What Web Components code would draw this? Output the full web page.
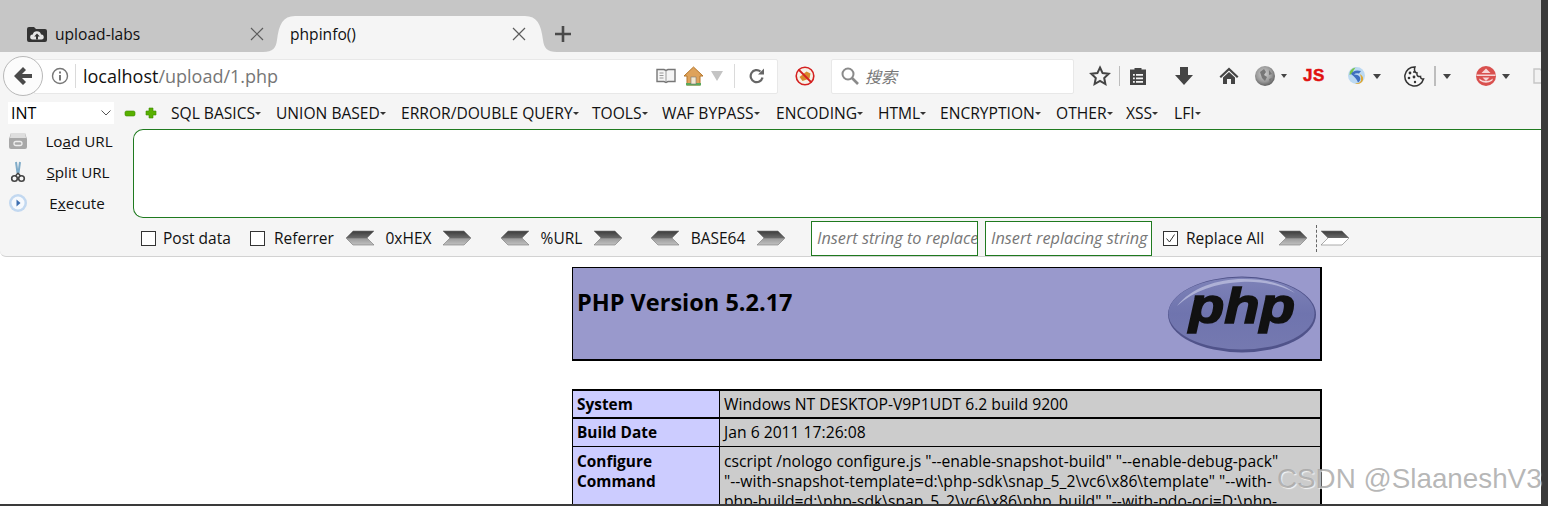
<!DOCTYPE html>
<html>
<head>
<meta charset="utf-8">
<title>phpinfo()</title>
<style>
  html, body { margin: 0; padding: 0; background: #fff; overflow: hidden; }
</style>
</head>
<body>
<browser-window>
  <tab-strip>
    <browser-tab icon="cloud" label="upload-labs"></browser-tab>
    <browser-tab active label="phpinfo()"></browser-tab>
  </tab-strip>
  <nav-bar></nav-bar>
  <hack-bar></hack-bar>
  <php-info></php-info>
</browser-window>

<script>
// window frame, dark line right and bottom + watermark on top
class BrowserWindow extends HTMLElement {
  constructor() {
    super();
    this.attachShadow({ mode: "open" }).innerHTML = `
    <style>
      :host { display: block; position: relative; width: 1548px; height: 506px; font-family: "Open Sans", "Noto Sans", sans-serif; color: #000; }
      .frame { display: flex; flex-direction: column; width: 1548px; height: 506px; box-sizing: border-box; border-right: 7px solid #3a3a3a; border-bottom: 2px solid #3a3a3a; overflow: hidden; background: #fff; }
      .mark { position: absolute; left: 1277px; top: 463px; font: 27.800px "Liberation Sans", sans-serif; white-space: nowrap;
        color: rgba(160,160,160,.75); text-shadow: 1px 1px 1px rgba(255,255,255,.8); }
    </style>
    <div class="frame"><slot></slot></div>
    <div class="mark">CSDN @SlaaneshV3</div>`;
  }
}
customElements.define("browser-window", BrowserWindow);

class TabStrip extends HTMLElement {
  constructor() {
    super();
    this.attachShadow({ mode: "open" }).innerHTML = `
    <style>
      :host { display: flex; height: 52px; flex: none; align-items: flex-end; background: #c6c6c6; padding-left: 16px; }
      .plus { width: 36px; height: 36px; margin-left: 2px; }
    </style>
    <slot></slot>
    <svg class="plus" viewBox="0 0 36 36"><path d="M18 10v16M10 18h16" stroke="#4a4a4a" stroke-width="2.600" fill="none"/></svg>`;
  }
}
customElements.define("tab-strip", TabStrip);

class BrowserTab extends HTMLElement {
  constructor() {
    super();
    const label = this.getAttribute("label");
    const icon = this.getAttribute("icon") ? `<svg class="ic" viewBox="0 0 20 16"><path d="M0 3q0-2 2-2h5l2 2h9q2 0 2 2v9q0 2-2 2H2q-2 0-2-2z" fill="#333"/><path d="M5.500 13.500a2.500 2.500 0 0 1 .3-5 4.200 4.200 0 0 1 8.200 0 2.500 2.500 0 0 1 .5 5z" fill="#e4e4e4"/><path d="M10 7.500l2.800 3H11v3H9v-3H7.200z" fill="#333"/></svg>` : "";
    const shape = this.hasAttribute("active") ? `<svg class="shape" width="294" height="36" viewBox="0 0 294 36"><path d="M0 36C10 36 13 32 14 24C16 8 20 0 32 0H262C274 0 278 8 280 24C281 32 284 36 294 36Z" fill="#f5f5f5"/></svg>` : "";
    this.attachShadow({ mode: "open" }).innerHTML = `
    <style>
      :host { display: flex; align-items: center; box-sizing: border-box; width: 261px; height: 36px; font-size: 15.600px; color: #111; position: relative; padding-left: 11px; }
      :host([active]) { width: 266px; padding-left: 13px; }
      .shape { position: absolute; left: -14px; top: 0; }
      .ic { width: 20px; height: 16px; margin-right: 8px; }
      .lbl { flex: 1; position: relative; }
      .x { width: 14px; height: 14px; margin-right: 13px; position: relative; flex: none; }
      :host([active]) .x { margin-right: 17px; }
    </style>
    ${shape}${icon}<span class="lbl">${label}</span>
    <svg class="x" viewBox="0 0 14 14"><path d="M1 1l12 12M13 1L1 13" stroke="#5c5c5c" stroke-width="1.200" fill="none"/></svg>`;
  }
}
customElements.define("browser-tab", BrowserTab);

class NavBar extends HTMLElement {
  constructor() {
    super();
    this.attachShadow({ mode: "open" }).innerHTML = `
    <style>
      :host { display: flex; align-items: center; height: 48px; flex: none; background: #f5f5f5; position: relative; padding-left: 3px; box-sizing: border-box; }
      .back { width: 40px; height: 40px; box-sizing: border-box; border: 1px solid #b8b8b8; border-radius: 50%; background: #fcfcfc; flex: none; z-index: 1; display: flex; align-items: center; justify-content: center; margin-top: -1px; }
      .url { width: 744px; height: 35px; box-sizing: border-box; margin-left: -9px; background: #fff; border: 1px solid #e8e8e8; border-radius: 0 2px 2px 0; display: flex; align-items: center; padding-left: 16px; font-size: 18px; flex: none; }
      .url .host { color: #111; }
      .url .path { color: #767676; }
      .sep { width: 1px; height: 24px; background: #dadada; margin: 0 6px; flex: none; }
      .grow { flex: 1; }
      .search { width: 243px; height: 35px; box-sizing: border-box; margin-left: 16px; background: #fff; border: 1px solid #e8e8e8; border-radius: 2px; display: flex; align-items: center; padding-left: 8px; gap: 5px; color: #777; font: italic 16px "Noto Sans CJK SC", sans-serif; flex: none; }
      svg { display: block; flex: none; }
      .tools { display: flex; align-items: center; margin-left: 15px; }
      .dd { width: 0; height: 0; border: 4px solid transparent; border-top: 5px solid #444; border-bottom: 0; flex: none; }
      .vsep { width: 1px; height: 20px; background: #bdbdbd; flex: none; }
      .js { margin-left: 16px; width: 26px; font: 900 17px "Liberation Sans", sans-serif; color: #e01010; letter-spacing: .5px; -webkit-text-stroke: .5px #e01010; flex: none; }
    </style>
    <div class="back"><svg width="22" height="22" viewBox="0 0 22 22"><path d="M11 2L2 11l9 9 3-3-4-4h10V9H10l4-4z" fill="#4a4a4a"/></svg></div>
    <div class="url">
      <svg width="18" height="18" viewBox="0 0 18 18" style="margin-right:6px"><circle cx="9" cy="9" r="7.500" fill="none" stroke="#777" stroke-width="1.400"/><rect x="8" y="8" width="2" height="5.500" fill="#777"/><rect x="8" y="4.500" width="2" height="2" fill="#777"/></svg>
      <span class="sep" style="margin:0 7px 0 0"></span>
      <span class="host">localhost</span><span class="path">/upload/1.php</span>
      <span class="grow"></span>
      <svg width="20" height="16" viewBox="0 0 20 16" style="margin-right:7px"><path d="M1 1.500h7l2 1 2-1h7v12h-7l-2 1-2-1H1z" fill="#f5f5f5" stroke="#777" stroke-width="1.400"/><path d="M10 2.500v11M3.500 5h4M3.500 7.500h4M3.500 10h4" stroke="#999" fill="none"/></svg>
      <svg width="21" height="20" viewBox="0 0 21 20"><path d="M10.500 1L1 10h3v9h13v-9h3z" fill="#dea25a" stroke="#b5762a"/><path d="M3 17h15v2.500H3z" fill="#5ba85b"/><rect x="8" y="11" width="5" height="7" fill="#f3e8d0" stroke="#777" stroke-width=".6"/></svg>
      <svg width="12" height="10" viewBox="0 0 12 10" style="margin-left:7px"><path d="M0 0h12L6 10z" fill="#c4c4c4"/></svg>
      <span class="sep" style="margin:0 14px 0 11px"></span>
      <svg width="16" height="16" viewBox="0 0 16 16" style="margin-right:12px"><path d="M13.500 9.500A6 6 0 1 1 11.500 3.500" fill="none" stroke="#666" stroke-width="2.200"/><path d="M9 6.500h6v-6z" fill="#666"/></svg>
    </div>
    <svg style="margin-left:17px" width="20" height="20" viewBox="0 0 20 20"><circle cx="10" cy="10" r="8.800" fill="#f6f2e8" stroke="#d42020" stroke-width="1.600"/><path d="M4.500 11l7-5.500 4 2-1 5-7 2.500z" fill="#d98a2b"/><path d="M3.500 3.500l13 13" stroke="#d42020" stroke-width="1.800"/></svg>
    <div class="search"><svg width="20" height="20" viewBox="0 0 20 20"><circle cx="8" cy="8" r="5.500" fill="none" stroke="#8a8a8a" stroke-width="2"/><path d="M12 12l6 6" stroke="#8a8a8a" stroke-width="2.600"/></svg><span>搜索</span></div>
    <div class="tools">
      <svg width="22" height="22" viewBox="0 0 22 22"><path d="M11 2.500l2.600 5.600 6.100.7-4.500 4.200 1.200 6L11 16l-5.400 3 1.200-6-4.500-4.200 6.100-.7z" fill="none" stroke="#444" stroke-width="2"/></svg>
      <span class="vsep" style="margin:0 8px 0 8px"></span>
      <svg width="20" height="20" viewBox="0 0 20 20"><path d="M2 3.500h4.500V2h7v1.500H18V19H2z" fill="#444"/><path d="M5 8h1.800v1.800H5zM8 8h7v1.800H8zM5 11.500h1.800v1.800H5zM8 11.500h7v1.800H8zM5 15h1.800v1.800H5zM8 15h7v1.800H8z" fill="#f5f5f5"/></svg>
      <svg style="margin-left:26px" width="20" height="20" viewBox="0 0 20 20"><path d="M6 1h8v8h5l-9 10L1 9h5z" fill="#444"/></svg>
      <svg style="margin-left:25px" width="20" height="20" viewBox="0 0 20 20"><path d="M10 1.500L0.500 10.500 2 12l8-7.500L18 12l1.500-1.500z" fill="#444"/><path d="M4 11.500L10 6l6 5.500V18h-4v-5H8v5H4z" fill="#444"/></svg>
      <svg style="margin-left:15px" width="22" height="22" viewBox="0 0 22 22"><defs><radialGradient id="gl" cx=".45" cy=".4" r=".65"><stop offset="0" stop-color="#d0d0d0"/><stop offset=".6" stop-color="#9a9a9a"/><stop offset="1" stop-color="#555"/></radialGradient></defs><circle cx="11" cy="11" r="10" fill="url(#gl)"/><path d="M6 7l4-3 2 3-2 3 3 2-2 4-3-3zM15 5l3 4-3 1zM15 14l3-1-2 4z" fill="#777"/></svg>
      <span class="dd" style="margin-left:5px;border-width:3px;border-top-width:4px"></span>
      <span class="js">JS</span>
      <svg style="margin-left:18px" width="20" height="20" viewBox="0 0 20 20"><circle cx="9.500" cy="9.500" r="8.500" fill="#bcd9f2"/><path d="M2.500 9q-.5-6 6-7.500-2.500 3-3 6z" fill="#79c64a"/><path d="M4 8q3-5 10-3l-2 2.500q-3-1-5 1 5 0 6 3t-2 5q-1-4-7-8.500z" fill="#3f6fc0"/><path d="M13 8q5 3 2 8-3 3-7 1.500 5 0 6-3 .5-3-1-6.500z" fill="#e0a830"/></svg>
      <span class="dd" style="margin-left:6px"></span>
      <svg style="margin-left:22px" width="22" height="22" viewBox="0 0 22 22"><path d="M12 2a9.500 9.500 0 1 0 8.500 12c-2 .5-3-1-3-2.500-2.500.5-4-1-3.500-3.500-2 0-3.200-3-2-6z" fill="#f7f7f7" stroke="#333" stroke-width="1.500"/><circle cx="7" cy="8" r="1.400" fill="#333"/><circle cx="11" cy="7" r="1" fill="#333"/><circle cx="6" cy="13" r="1.300" fill="#333"/><circle cx="11" cy="12" r="1.400" fill="#333"/><circle cx="12" cy="17" r="1.200" fill="#333"/></svg>
      <span class="vsep" style="margin-left:9px;width:2px;height:20px"></span>
      <span class="dd" style="margin-left:7px"></span>
      <svg style="margin-left:24px" width="22" height="22" viewBox="0 0 22 22"><circle cx="11" cy="11" r="10" fill="#d9504e"/><path d="M1.500 9.500h19v1.500h-19z" fill="#f5d5d5"/><path d="M4 13.500q7 5 14 0l-.8 2.200q-6.200 4-12.400 0z" fill="#f8dcdc"/><path d="M11 3.500l4.500 4.500h-9z" fill="#f7d6d6"/><path d="M11 16l-3.500-3.500h7z" fill="#f7d6d6"/></svg>
      <span class="dd" style="margin-left:5px"></span>
      <svg style="margin-left:23px" width="11" height="16" viewBox="0 0 11 16"><path d="M1 1h6l3 3v11H1z" fill="#f2f2f2" stroke="#c6c6c6" stroke-width="1.400"/></svg>
    </div>`;
  }
}
customElements.define("nav-bar", NavBar);

class HackMenu extends HTMLElement {
  constructor() {
    super();
    this.attachShadow({ mode: "open" }).innerHTML = `
    <style>
      :host { display: flex; align-items: center; white-space: nowrap; font-size: 15.600px; color: #111; flex: none; }
      i { display: block; width: 0; height: 0; margin-left: 0; margin-top: 1px; border: 3px solid transparent; border-top: 3px solid #333; border-bottom: 0; }
    </style>
    <slot></slot><i></i>`;
  }
}
customElements.define("hack-menu", HackMenu);

class HackArrow extends HTMLElement {
  constructor() {
    super();
    const left = this.hasAttribute("left");
    const hollow = this.hasAttribute("hollow");
    const id = "g" + (left ? "l" : "r");
    const d = left ? "M0 8L7 1h21l-7 7 7 7H7z" : "M0 1h21l7 7-7 7H0l7-7z";
    this.attachShadow({ mode: "open" }).innerHTML = `
    <style>:host { display: block; width: 28px; height: 16px; flex: none; } svg { display: block; }</style>
    <svg width="28" height="16" viewBox="0 0 28 16"><defs><linearGradient id="${id}" x1="0" y1="0" x2="0" y2="1">
      <stop offset="0" stop-color="#3c3c3c"/><stop offset=".5" stop-color="#6a6a6a"/>
      ${hollow ? '<stop offset=".5" stop-color="#fff"/><stop offset="1" stop-color="#fff"/>' : '<stop offset=".55" stop-color="#9c9c9c"/><stop offset="1" stop-color="#c2c2c2"/>'}
    </linearGradient></defs><path d="${d}" fill="url(#${id})" stroke="#777" stroke-width=".6"/></svg>`;
  }
}
customElements.define("hack-arrow", HackArrow);

class HackSide extends HTMLElement {
  constructor() {
    super();
    this.attachShadow({ mode: "open" }).innerHTML = `
    <style>
      :host { display: flex; align-items: center; height: 31px; flex: none; font-size: 15.200px; color: #111; }
      .ic { width: 20px; height: 22px; margin-left: 8px; flex: none; display: flex; align-items: center; }
      .t { flex: 1; text-align: center; padding-right: var(--pr, 3px); white-space: nowrap; }
    </style>
    <span class="ic"><slot name="ic"></slot></span><span class="t"><slot></slot></span>`;
  }
}
customElements.define("hack-side", HackSide);

class CheckBox extends HTMLElement {
  constructor() {
    super();
    const on = this.hasAttribute("checked");
    this.attachShadow({ mode: "open" }).innerHTML = `
    <style>
      :host { display: inline-flex; align-items: center; gap: var(--gap, 7px); font-size: 15.500px; color: #111; white-space: nowrap; flex: none; box-sizing: border-box; }
      .b { width: 15px; height: 15px; box-sizing: border-box; border: 1px solid #333; background: #fff; display: block; flex: none; }
    </style>
    <svg class="b" viewBox="0 0 13 13">${on ? '<path d="M2.500 6.500l3 3.500 5-7.500" fill="none" stroke="#333" stroke-width="1"/>' : ""}</svg><slot></slot>`;
  }
}
customElements.define("check-box", CheckBox);

class HackBar extends HTMLElement {
  constructor() {
    super();
    this.attachShadow({ mode: "open" }).innerHTML = `
    <style>
      :host { display: grid; grid-template-columns: 133px 1fr; grid-template-rows: 28px 90px 38px; height: 157px; flex: none; box-sizing: border-box; background: #f5f5f5; border-bottom: 1px solid #d2d2d2; border-radius: 0 0 0 6px; overflow: hidden; }
      .sel { grid-column: 1 / 3; display: flex; align-items: center; height: 26px; padding-left: 8px; }
      .drop { width: 106px; height: 22px; box-sizing: border-box; background: #fff; display: flex; align-items: center; justify-content: space-between; padding: 0 3px; font-size: 16px; flex: none; }
      .pm { display: flex; align-items: center; gap: 9px; margin: 0 14px 0 10px; flex: none; }
      .menu { display: flex; align-items: center; }
      .side { display: flex; flex-direction: column; margin-top: -3px; }
      .url { box-sizing: border-box; border: 1px solid #1f7a1f; border-right: 0; border-radius: 10px 0 0 10px; background: #fff; height: 89px; margin-top: 1px; }
      .bottom { grid-column: 2; display: flex; align-items: center; padding-left: 8px; height: 38px; padding-top: 2px; box-sizing: border-box; }
      .bottom span.lbl { font-size: 15.500px; color: #111; text-align: center; flex: none; white-space: nowrap; }
      .inp { box-sizing: border-box; width: 167px; height: 35px; border: 1px solid #1f7a1f; background: #fff; color: #777; font-style: italic; font-size: 16.300px; display: flex; align-items: center; padding-left: 5px; overflow: hidden; white-space: nowrap; flex: none; }
      .dash { width: 0; height: 27px; border-left: 1px dashed #666; flex: none; margin: 0 4px 0 9px; }
    </style>
    <div class="sel">
      <div class="drop"><span>INT</span><svg width="10" height="6" viewBox="0 0 10 6"><path d="M.5.500L5 5 9.500.500" fill="none" stroke="#555"/></svg></div>
      <div class="pm">
        <svg width="12" height="10" viewBox="0 0 12 10"><rect x="1" y="3" width="10" height="5" rx="1.500" fill="#58b000" stroke="#3d8a00" stroke-width=".6"/></svg>
        <svg width="12" height="12" viewBox="0 0 12 12"><path d="M4 1h4v3h3v4H8v3H4V8H1V4h3z" fill="#58b000" stroke="#3d8a00" stroke-width=".6"/></svg>
      </div>
      <div class="menu">
        <hack-menu style="width:105px">SQL BASICS</hack-menu><hack-menu style="width:125px">UNION BASED</hack-menu><hack-menu style="width:191px">ERROR/DOUBLE QUERY</hack-menu><hack-menu style="width:70px">TOOLS</hack-menu><hack-menu style="width:114px">WAF BYPASS</hack-menu><hack-menu style="width:102px">ENCODING</hack-menu><hack-menu style="width:62px">HTML</hack-menu><hack-menu style="width:116px">ENCRYPTION</hack-menu><hack-menu style="width:70px">OTHER</hack-menu><hack-menu style="width:48px">XSS</hack-menu><hack-menu>LFI</hack-menu>
      </div>
    </div>
    <div class="side">
      <hack-side style="--pr:3px"><svg slot="ic" width="20" height="18" viewBox="0 0 20 18"><path d="M3 1h14l2 6v8q0 2-2 2H3q-2 0-2-2V7z" fill="#a8a8a8"/><path d="M3 1h14l1 5H2z" fill="#dedede"/><rect x="6" y="9.500" width="8" height="4" rx="2" fill="none" stroke="#eee" stroke-width="1.300"/></svg>Lo<u>a</u>d URL</hack-side>
      <hack-side style="--pr:5px"><svg slot="ic" width="20" height="22" viewBox="0 0 20 22"><path d="M8 1l1.500 11M12 1l-1.500 11" stroke="#7fabc8" stroke-width="2" fill="none"/><circle cx="6.500" cy="17.500" r="2.800" fill="none" stroke="#444" stroke-width="1.600"/><circle cx="13.500" cy="17.500" r="2.800" fill="none" stroke="#444" stroke-width="1.600"/><path d="M10 12l-2.500 3M10 12l2.500 3" stroke="#444" stroke-width="1.400"/></svg><u>S</u>plit URL</hack-side>
      <hack-side style="--pr:7px"><svg slot="ic" width="20" height="20" viewBox="0 0 20 20"><circle cx="10" cy="10" r="9" fill="#c2d8f0"/><circle cx="10" cy="10" r="6.500" fill="#f6f9fd"/><path d="M8.500 6.500l4 3.500-4 3.500z" fill="#3c6eb0"/></svg>E<u>x</u>ecute</hack-side>
    </div>
    <div class="url"></div>
    <div class="bottom">
      <check-box style="width:109px">Post data</check-box>
      <check-box style="width:96px;--gap:9px">Referrer</check-box>
      <hack-arrow left></hack-arrow><span class="lbl" style="width:69px">0xHEX</span><hack-arrow></hack-arrow>
      <hack-arrow left style="margin-left:30px"></hack-arrow><span class="lbl" style="width:65px">%URL</span><hack-arrow></hack-arrow>
      <hack-arrow left style="margin-left:29px"></hack-arrow><span class="lbl" style="width:78px">BASE64</span><hack-arrow></hack-arrow>
      <div class="inp" style="margin-left:26px">Insert string to replace</div>
      <div class="inp" style="margin-left:7px">Insert replacing string</div>
      <check-box checked style="margin-left:11px;width:116px;--gap:8px">Replace All</check-box>
      <hack-arrow></hack-arrow>
      <div class="dash"></div>
      <hack-arrow hollow></hack-arrow>
    </div>`;
  }
}
customElements.define("hack-bar", HackBar);

class PhpRow extends HTMLElement {
  constructor() {
    super();
    this.attachShadow({ mode: "open" }).innerHTML = `
    <style>
      :host { display: grid; grid-template-columns: 147px 1fr; line-height: 20px; border-top: var(--bt, 2px) solid #000; }
      .k { background: #ccf; font-size: 15.400px; font-weight: 700; padding: calc(var(--pt, 3px) + 1px) 3px 0 4px; border-right: 1px solid #000; }
      .v { background: #ccc; font-size: 15.700px; padding: var(--pt, 3px) 3px var(--pb, 3px) 4px; white-space: nowrap; overflow: hidden; }
    </style>
    <div class="k"><slot name="k"></slot></div><div class="v"><slot></slot></div>`;
  }
}
customElements.define("php-row", PhpRow);

class PhpInfo extends HTMLElement {
  constructor() {
    super();
    this.attachShadow({ mode: "open" }).innerHTML = `
    <style>
      :host { display: block; flex: none; width: 750px; margin: 10px 0 0 572px; color: #000; }
      .head { box-sizing: border-box; height: 94px; border: 1px solid #000; border-right-width: 2px; border-bottom-width: 2px; background: #99c; display: flex; justify-content: space-between; align-items: flex-start; padding: 19px 4px 0 4px; font-size: 23.500px; font-weight: 700; line-height: 30px; }
      .head svg { margin: -11px -1px 0 0; flex: none; }
      .table { margin-top: 28px; box-sizing: border-box; border: 1px solid #000; border-right-width: 2px; border-top-width: 2px; }
    </style>
    <div class="head"><span>PHP Version 5.2.17</span>
      <svg width="150" height="78" viewBox="0 0 150 78">
        <defs><linearGradient id="el" x1="0" y1="0" x2="0" y2="1"><stop offset="0" stop-color="#7e82b8"/><stop offset=".5" stop-color="#6f74ae"/><stop offset="1" stop-color="#7579b0"/></linearGradient></defs>
        <ellipse cx="75" cy="38.500" rx="74" ry="38" fill="#50538a"/>
        <ellipse cx="74.500" cy="37.500" rx="73" ry="36" fill="url(#el)"/>
        <path d="M10 30C24 12 50 3 76 3c26 0 42 6 52 14C112 8 92 5 74 6 50 7 26 15 10 30z" fill="#aeb1d6"/>
        <text x="22" y="47" font-family="Liberation Sans" font-style="italic" font-weight="700" font-size="50" textLength="106" lengthAdjust="spacingAndGlyphs" fill="#111" stroke="#111" stroke-width="1.600">php</text>
      </svg>
    </div>
    <div class="table">
      <php-row style="--bt:0px"><span slot="k">System</span>Windows NT DESKTOP-V9P1UDT 6.2 build 9200</php-row>
      <php-row style="--pb:4px"><span slot="k">Build Date</span>Jan 6 2011 17:26:08</php-row>
      <php-row style="--bt:1px;--pt:4px;--pb:4px"><span slot="k">Configure<br>Command</span>cscript /nologo configure.js "--enable-snapshot-build" "--enable-debug-pack"<br>"--with-snapshot-template=d:\\php-sdk\\snap_5_2\\vc6\\x86\\template" "--with-<br>php-build=d:\\php-sdk\\snap_5_2\\vc6\\x86\\php_build" "--with-pdo-oci=D:\\php-</php-row>
    </div>`;
  }
}
customElements.define("php-info", PhpInfo);
</script>
</body>
</html>
